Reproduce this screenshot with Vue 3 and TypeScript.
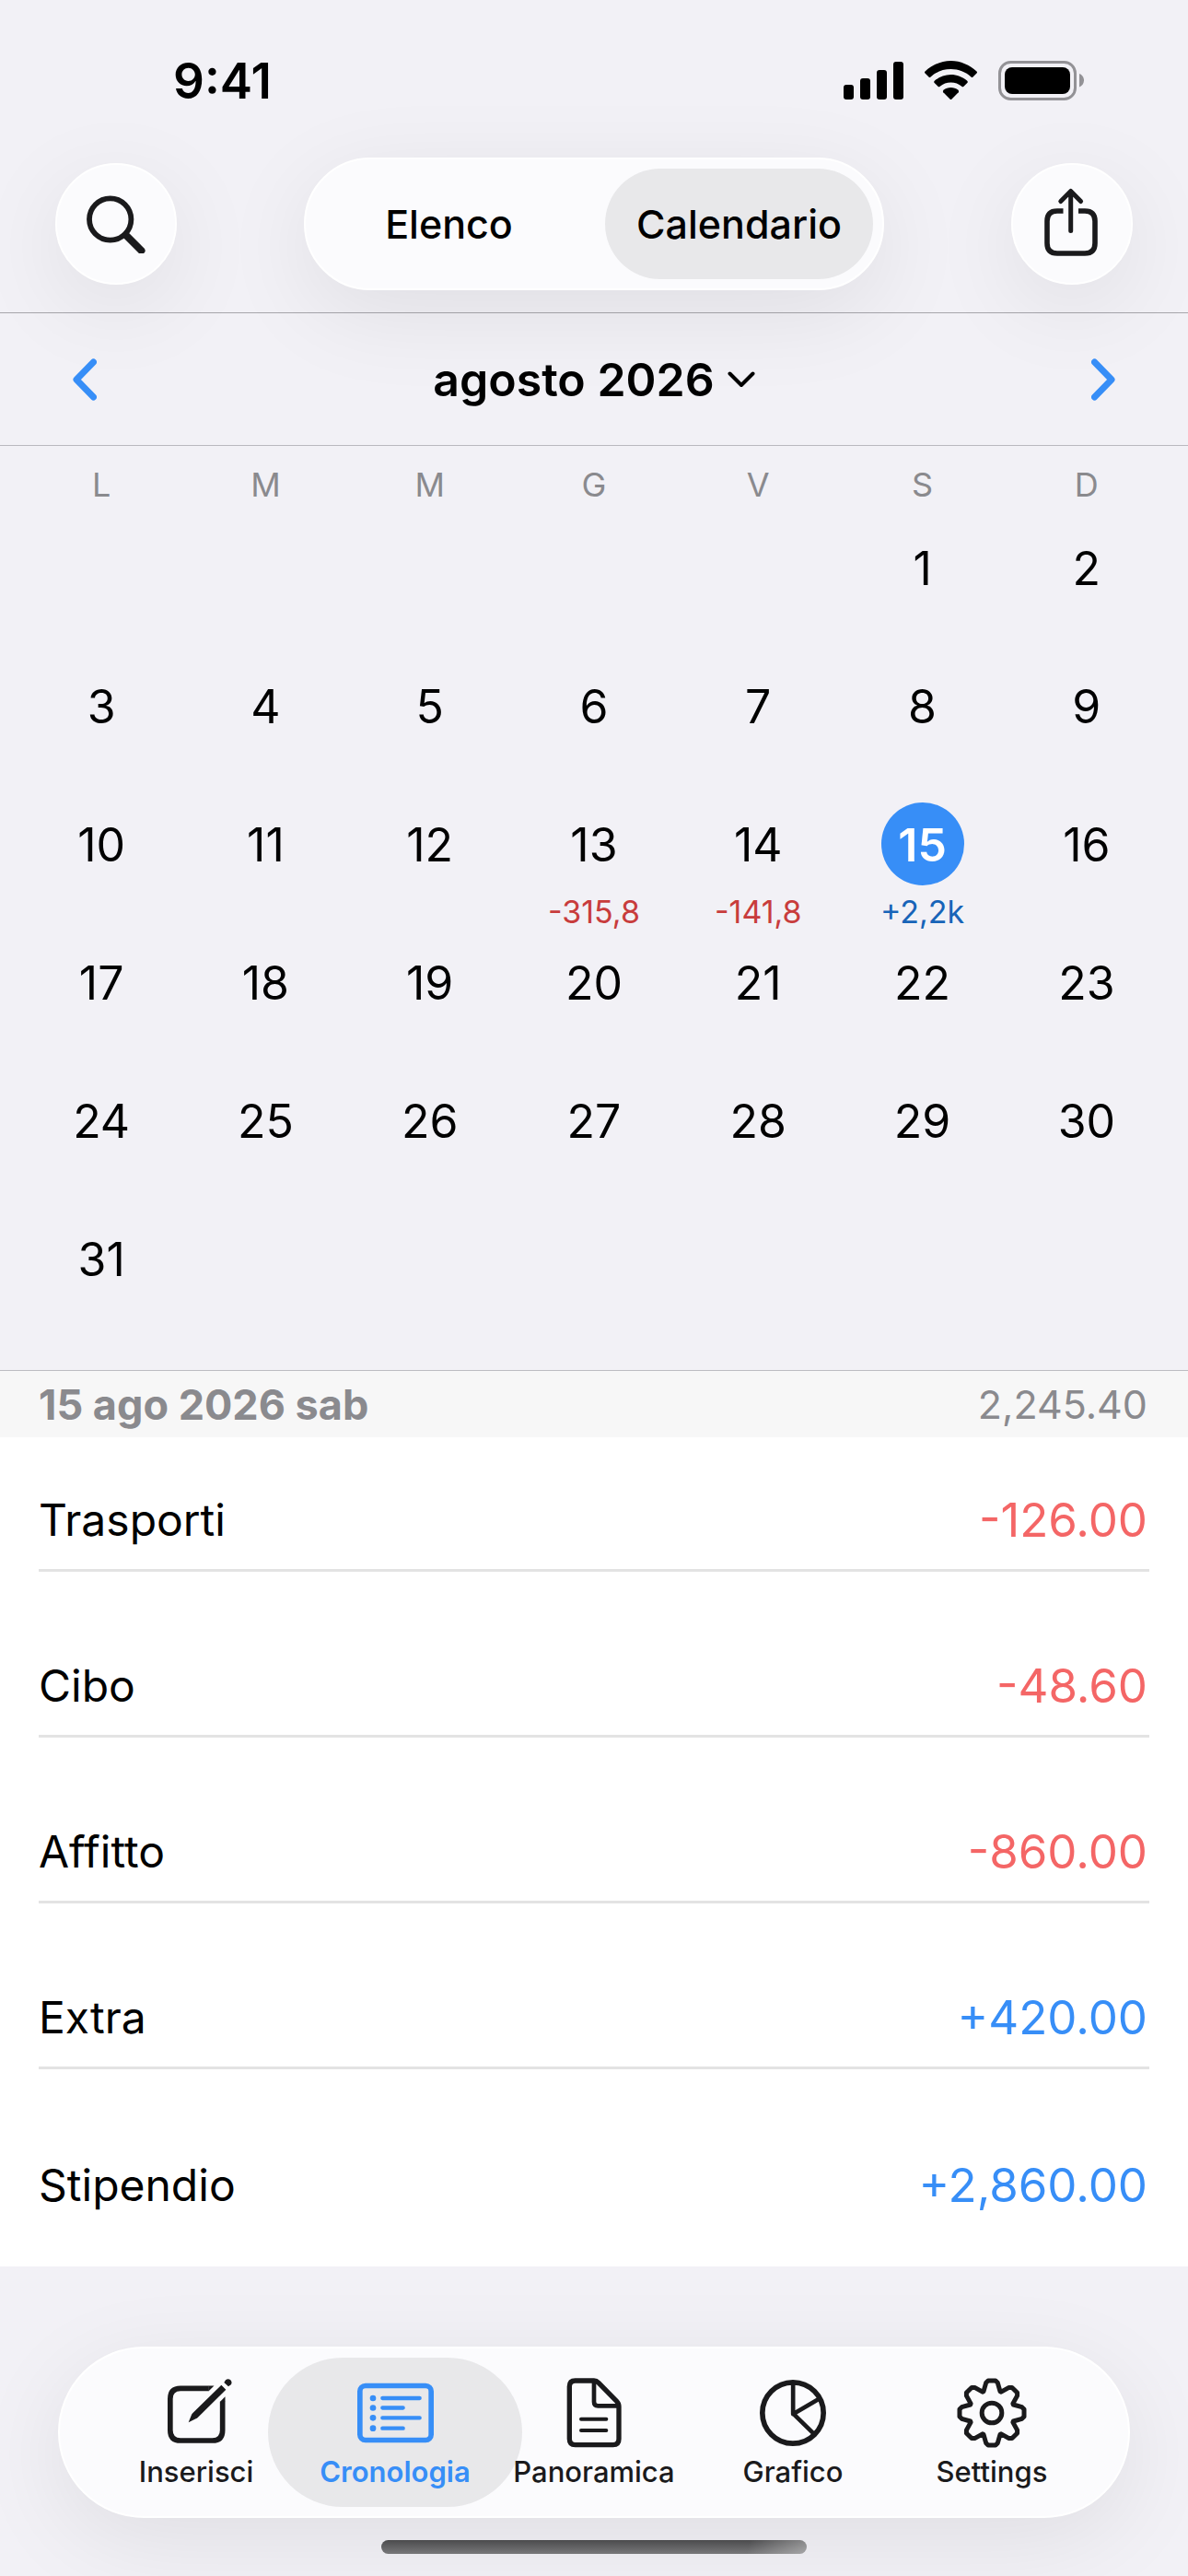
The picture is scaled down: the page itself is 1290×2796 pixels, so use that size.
<script setup lang="ts">
import { ref } from 'vue'

interface DayTotal {
  text: string
  kind: 'out' | 'in'
}

interface Entry {
  name: string
  amount: string
  kind: 'out' | 'in'
}

const views = ['Elenco', 'Calendario']
const activeView = ref('Calendario')

const weekdays = ['L', 'M', 'M', 'G', 'V', 'S', 'D']
const leadingBlanks = 5
const daysInMonth = 31
const selectedDay = ref(15)

const totals: Record<number, DayTotal> = {
  13: { text: '-315,8', kind: 'out' },
  14: { text: '-141,8', kind: 'out' },
  15: { text: '+2,2k', kind: 'in' },
}

// Weeks of the month, Monday first; null marks a cell outside the month.
const weeks: (number | null)[][] = []
for (let start = 1 - leadingBlanks; start <= daysInMonth; start += 7) {
  weeks.push(
    Array.from({ length: 7 }, (_, i) => {
      const day = start + i
      return day >= 1 && day <= daysInMonth ? day : null
    }),
  )
}

const entries: Entry[] = [
  { name: 'Trasporti', amount: '-126.00', kind: 'out' },
  { name: 'Cibo', amount: '-48.60', kind: 'out' },
  { name: 'Affitto', amount: '-860.00', kind: 'out' },
  { name: 'Extra', amount: '+420.00', kind: 'in' },
  { name: 'Stipendio', amount: '+2,860.00', kind: 'in' },
]

const tabs = [
  { id: 'inserisci', label: 'Inserisci' },
  { id: 'cronologia', label: 'Cronologia' },
  { id: 'panoramica', label: 'Panoramica' },
  { id: 'grafico', label: 'Grafico' },
  { id: 'settings', label: 'Settings' },
]
const activeTab = ref('cronologia')

// One tooth of the cog, repeated every 45 degrees around the origin.
const tooth: [number, number][] = [
  [-27, -70], [-19, -98], [-12, -105], [12, -105], [19, -98], [27, -70],
]
const cogPoints = Array.from({ length: 8 }, (_, k) => {
  const a = (k * Math.PI) / 4
  return tooth
    .map(([x, y]) => {
      const px = x * Math.cos(a) - y * Math.sin(a)
      const py = x * Math.sin(a) + y * Math.cos(a)
      return `${px.toFixed(1)},${py.toFixed(1)}`
    })
    .join(' ')
}).join(' ')
</script>

<template>
  <div class="screen">
    <header class="top">
      <div class="status">
        <span class="clock">9:41</span>
        <svg class="status-icons" viewBox="916 64 262 46" aria-hidden="true">
          <rect x="916" y="91" width="11" height="16" rx="3" />
          <rect x="934" y="84" width="11" height="23" rx="3" />
          <rect x="952" y="75" width="11" height="32" rx="3" />
          <rect x="970" y="66" width="11" height="41" rx="3" />
          <path d="M1032.500 65C1043 65 1053 69.500 1060.500 76.500Q1061.500 77.500 1060.500 78.500L1056.500 82.500Q1055.500 83.500 1054.500 82.500C1048.500 77 1041 74 1032.500 74S1016.500 77 1010.500 82.500Q1009.500 83.500 1008.500 82.500L1004.500 78.500Q1003.500 77.500 1004.500 76.500C1012 69.500 1022 65 1032.500 65Z" />
          <path d="M1032.500 80C1039 80 1045 82.500 1050 86.500Q1051.500 87.800 1050.300 89L1046.500 92.800Q1045.500 93.800 1044.300 92.800C1041 90 1037 88.500 1032.500 88.500S1024 90 1020.700 92.800Q1019.500 93.800 1018.500 92.800L1014.700 89Q1013.500 87.800 1015 86.500C1020 82.500 1026 80 1032.500 80Z" />
          <path d="M1032.500 94C1035.500 94 1038.200 95 1040.500 96.800Q1041.800 98 1040.700 99.200L1033.500 106.500Q1032.500 107.500 1031.500 106.500L1024.300 99.200Q1023.200 98 1024.500 96.800C1026.800 95 1029.500 94 1032.500 94Z" />
          <rect x="1085.500" y="66.500" width="82" height="40" rx="12" fill="none" stroke="#939296" stroke-width="3" />
          <rect x="1091" y="72" width="71" height="29" rx="8" />
          <path d="M1172 79V93.500C1175 92.500 1177 89.500 1177 86.300S1175 80 1172 79Z" fill="#939296" />
        </svg>
      </div>

      <div class="toolbar">
        <button type="button" class="round glass" aria-label="Cerca">
          <svg class="icon-search" viewBox="94 211 64 64" aria-hidden="true">
            <circle cx="119.700" cy="238" r="22.700" fill="none" stroke="currentColor" stroke-width="5.800" />
            <path d="M137 255.500L153.500 272" stroke="currentColor" stroke-width="8" stroke-linecap="round" />
          </svg>
        </button>

        <div class="segmented glass" role="group" aria-label="Vista">
          <button
            v-for="view in views"
            :key="view"
            type="button"
            class="segment"
            :class="{ active: view === activeView }"
            :aria-pressed="view === activeView"
            @click="activeView = view"
          >
            {{ view }}
          </button>
        </div>

        <button type="button" class="round glass" aria-label="Condividi">
          <svg class="icon-share" viewBox="1132 203 64 80" fill="none" stroke="currentColor" aria-hidden="true">
            <path d="M1154.500 229H1148Q1137 229 1137 240V264Q1137 275 1148 275H1178Q1189 275 1189 264V240Q1189 229 1178 229H1171" stroke-width="5.600" />
            <path d="M1162.700 209V250.500M1151.800 218.500L1162.700 207.500L1173.600 218.500" stroke-width="5" stroke-linecap="round" stroke-linejoin="round" />
          </svg>
        </button>
      </div>
    </header>

    <section class="month">
      <button type="button" class="step" aria-label="Mese precedente">
        <svg class="chevron" viewBox="0 0 26 46" aria-hidden="true">
          <path d="M22.500 4L4 23L22.500 42" />
        </svg>
      </button>
      <button type="button" class="month-title">
        <span>agosto 2026</span>
        <svg class="caret" viewBox="0 0 30 18" aria-hidden="true">
          <path d="M2.500 2.500L15 15L27.500 2.500" />
        </svg>
      </button>
      <button type="button" class="step" aria-label="Mese successivo">
        <svg class="chevron" viewBox="0 0 26 46" aria-hidden="true">
          <path d="M3.500 4L22 23L3.500 42" />
        </svg>
      </button>
    </section>

    <section class="calendar">
      <table>
        <thead>
          <tr>
            <th v-for="(name, i) in weekdays" :key="i" scope="col">{{ name }}</th>
          </tr>
        </thead>
        <tbody>
          <tr v-for="(week, w) in weeks" :key="w">
            <td v-for="(day, d) in week" :key="d">
              <template v-if="day !== null">
                <button
                  type="button"
                  class="day"
                  :class="{ selected: day === selectedDay }"
                  @click="selectedDay = day"
                >
                  {{ day }}
                </button>
                <span v-if="totals[day]" class="total" :class="totals[day].kind">{{ totals[day].text }}</span>
              </template>
            </td>
          </tr>
        </tbody>
      </table>
    </section>

    <section class="entries">
      <h2 class="day-head">
        <span>15 ago 2026 sab</span>
        <span class="day-sum">2,245.40</span>
      </h2>
      <ul>
        <li v-for="entry in entries" :key="entry.name">
          <div class="entry">
            <span>{{ entry.name }}</span>
            <span class="amount" :class="entry.kind">{{ entry.amount }}</span>
          </div>
        </li>
      </ul>
    </section>

    <footer class="dock">
      <nav class="tabbar glass">
        <a
          v-for="tab in tabs"
          :key="tab.id"
          :href="'#' + tab.id"
          class="tab"
          :class="{ active: tab.id === activeTab }"
          @click.prevent="activeTab = tab.id"
        >
          <svg v-if="tab.id === 'inserisci'" class="tab-icon" viewBox="72 93 231 228" aria-hidden="true">
            <path d="M227.500 127H135Q101.500 127 101.500 161V263Q101.500 297 135 297H239Q272 297 272 263V170.500" fill="none" stroke="currentColor" stroke-width="17" />
            <path d="M227 118.500H244.500L227 135.500ZM280.500 153.500V171H263.500Z" fill="currentColor" />
            <path d="M161 238L171 213Q173 209 176 206L268 116.500L283 131L192 221Q189 224 185 226Z" fill="currentColor" />
            <path d="M277 108L282 100Q290 94 298 100Q305 108 299 115L291 121Z" fill="currentColor" />
          </svg>
          <svg v-else-if="tab.id === 'cronologia'" class="tab-icon" viewBox="711 94 249 228" aria-hidden="true">
            <rect x="719.500" y="119.500" width="232" height="177" rx="18" fill="none" stroke="currentColor" stroke-width="17" />
            <g fill="currentColor">
              <circle cx="762" cy="160" r="10" />
              <circle cx="762" cy="191.500" r="10" />
              <circle cx="762" cy="224" r="10" />
              <circle cx="762" cy="258" r="10" />
            </g>
            <path d="M793 160H914M793 191.500H860M793 224H914M793 258H860" stroke="currentColor" stroke-width="13" stroke-linecap="round" />
          </svg>
          <svg v-else-if="tab.id === 'panoramica'" class="tab-icon" viewBox="15 34 180 228" fill="none" stroke="currentColor" stroke-linejoin="round" aria-hidden="true">
            <path d="M105 43H44Q25 43 25 62V233Q25 252 44 252H167Q186 252 186 233V127Q186 117 179 110L120 50Q113 43 105 43Z" stroke-width="16" />
            <path d="M105 43V112Q105 125 118 125H186" stroke-width="14" />
            <path d="M63 168H145M63 205H145" stroke-width="12" stroke-linecap="round" />
          </svg>
          <svg v-else-if="tab.id === 'grafico'" class="tab-icon" viewBox="647 33 216 228" fill="none" stroke="currentColor" aria-hidden="true">
            <circle cx="755" cy="147" r="99.500" stroke-width="17" />
            <path d="M755.500 47V151L840 101M755.500 149L823 215" stroke-width="14" stroke-linejoin="round" />
          </svg>
          <svg v-else class="tab-icon" viewBox="-114 -114 228 228" fill="none" stroke="currentColor" stroke-linejoin="round" aria-hidden="true">
            <polygon :points="cogPoints" stroke-width="15" />
            <circle r="32.500" stroke-width="15" />
          </svg>
          <span>{{ tab.label }}</span>
        </a>
      </nav>
      <div class="home-indicator"></div>
    </footer>
  </div>
</template>

<style>
body {
  margin: 0;
  background: #f2f1f6;
}
</style>

<style scoped>
.screen {
  --blue: #378ef7;
  --red: #f46666;
  --gray: #8a8a8e;
  display: flex;
  flex-direction: column;
  min-height: 100vh;
  background: #f2f1f6;
  color: #000;
  font-family: Inter, "Liberation Sans", sans-serif;
  overflow: hidden;
}

button {
  padding: 0;
  border: 0;
  background: none;
  color: inherit;
  font: inherit;
  cursor: pointer;
}

svg {
  display: block;
}

.glass {
  box-sizing: border-box;
  border: 2px solid #fff;
  background: #fbfbfd;
  box-shadow: 0 24px 100px rgba(0, 0, 0, 0.08);
}

.top {
  border-bottom: 1px solid #a7a6ac;
}

.status {
  display: flex;
  align-items: center;
  justify-content: space-between;
  box-sizing: border-box;
  height: 171px;
  padding: 4px 112px 0 188px;
}

.clock {
  font-size: 53px;
  font-weight: 600;
}

.status-icons {
  width: 262px;
  height: 46px;
}

.toolbar {
  display: flex;
  align-items: center;
  justify-content: space-between;
  padding: 0 60px 24px;
}

.round {
  display: flex;
  align-items: center;
  justify-content: center;
  width: 132px;
  height: 132px;
  border-radius: 50%;
  color: #1a1a1c;
}

.icon-search {
  width: 64px;
  height: 64px;
}

.icon-share {
  width: 64px;
  height: 80px;
}

.segmented {
  display: grid;
  grid-template-columns: 1fr 1fr;
  gap: 24px;
  width: 630px;
  height: 144px;
  padding: 10px;
  border-radius: 72px;
}

.segment {
  border-radius: 60px;
  font-size: 43px;
  font-weight: 500;
}

.segment.active {
  background: #e8e8ea;
}

.month {
  display: flex;
  align-items: center;
  justify-content: space-between;
  height: 143px;
  padding: 0 79px;
  border-bottom: 1px solid #bab9bf;
}

.chevron {
  width: 26px;
  height: 46px;
  fill: none;
  stroke: var(--blue);
  stroke-width: 7px;
  stroke-linecap: round;
  stroke-linejoin: round;
}

.month-title {
  display: flex;
  align-items: center;
  gap: 14px;
  font-size: 50px;
  font-weight: 600;
}

.caret {
  width: 30px;
  height: 18px;
  fill: none;
  stroke: #000;
  stroke-width: 4px;
  stroke-linecap: round;
  stroke-linejoin: round;
}

.calendar {
  padding: 0 21px 16px;
  border-bottom: 1px solid #bcbcc2;
}

table {
  width: 100%;
  table-layout: fixed;
  border-collapse: collapse;
}

th {
  height: 84px;
  padding: 0 0 3px;
  color: var(--gray);
  font-size: 36px;
  font-weight: 400;
}

td {
  height: 150px;
  padding: 0;
  text-align: center;
  vertical-align: top;
}

.day {
  display: block;
  box-sizing: border-box;
  width: 90px;
  height: 90px;
  margin: 0 auto;
  padding-top: 2px;
  border-radius: 50%;
  font-size: 50px;
}

.day.selected {
  background: var(--blue);
  color: #fff;
  font-weight: 600;
}

.total {
  display: block;
  margin-top: 10px;
  font-size: 34px;
  line-height: 38px;
}

.total.out {
  color: #c83c3c;
}

.total.in {
  color: #1764b8;
}

.entries {
  position: relative;
  z-index: 1;
  background: #fff;
}

.day-head {
  display: flex;
  align-items: center;
  justify-content: space-between;
  height: 72px;
  margin: 0;
  padding: 0 44px 0 42px;
  background: #f7f7f7;
  color: var(--gray);
  font-size: 45px;
  font-weight: 700;
}

.day-sum {
  font-size: 43px;
  font-weight: 400;
}

ul {
  margin: 0;
  padding: 0;
  list-style: none;
}

li {
  padding: 36px 42px 34px;
}

.entry {
  display: flex;
  align-items: center;
  justify-content: space-between;
  box-sizing: border-box;
  height: 110px;
  padding-right: 2px;
  border-bottom: 3px solid #e3e3e3;
  font-size: 48px;
}

li:last-child .entry {
  border-bottom: 0;
}

.amount {
  font-size: 51px;
}

.amount.out {
  color: var(--red);
}

.amount.in {
  color: var(--blue);
}

.dock {
  margin-top: auto;
  padding: 0 63px 24px;
}

.tabbar {
  display: grid;
  grid-template-columns: repeat(5, 1fr);
  height: 186px;
  padding: 10px 40px;
  border-radius: 93px;
}

.tab {
  position: relative;
  z-index: 0;
  display: flex;
  flex-direction: column;
  align-items: center;
  gap: 8px;
  padding-top: 22px;
  color: #1a1a1c;
  font-size: 31px;
  font-weight: 500;
  line-height: 36px;
  text-decoration: none;
}

.tab.active {
  color: var(--blue);
  font-weight: 600;
}

.tab.active::before {
  content: "";
  position: absolute;
  inset: 0 -30px;
  z-index: -1;
  border-radius: 81px;
  background: #e8e8ea;
}

.tab-icon {
  height: 76px;
}

.home-indicator {
  width: 462px;
  height: 15px;
  margin: 24px auto 0;
  border-radius: 8px;
  background:
    linear-gradient(100deg, transparent 86%, rgba(255, 255, 255, 0.35)),
    linear-gradient(#4b4b4d, #78787a);
}
</style>
